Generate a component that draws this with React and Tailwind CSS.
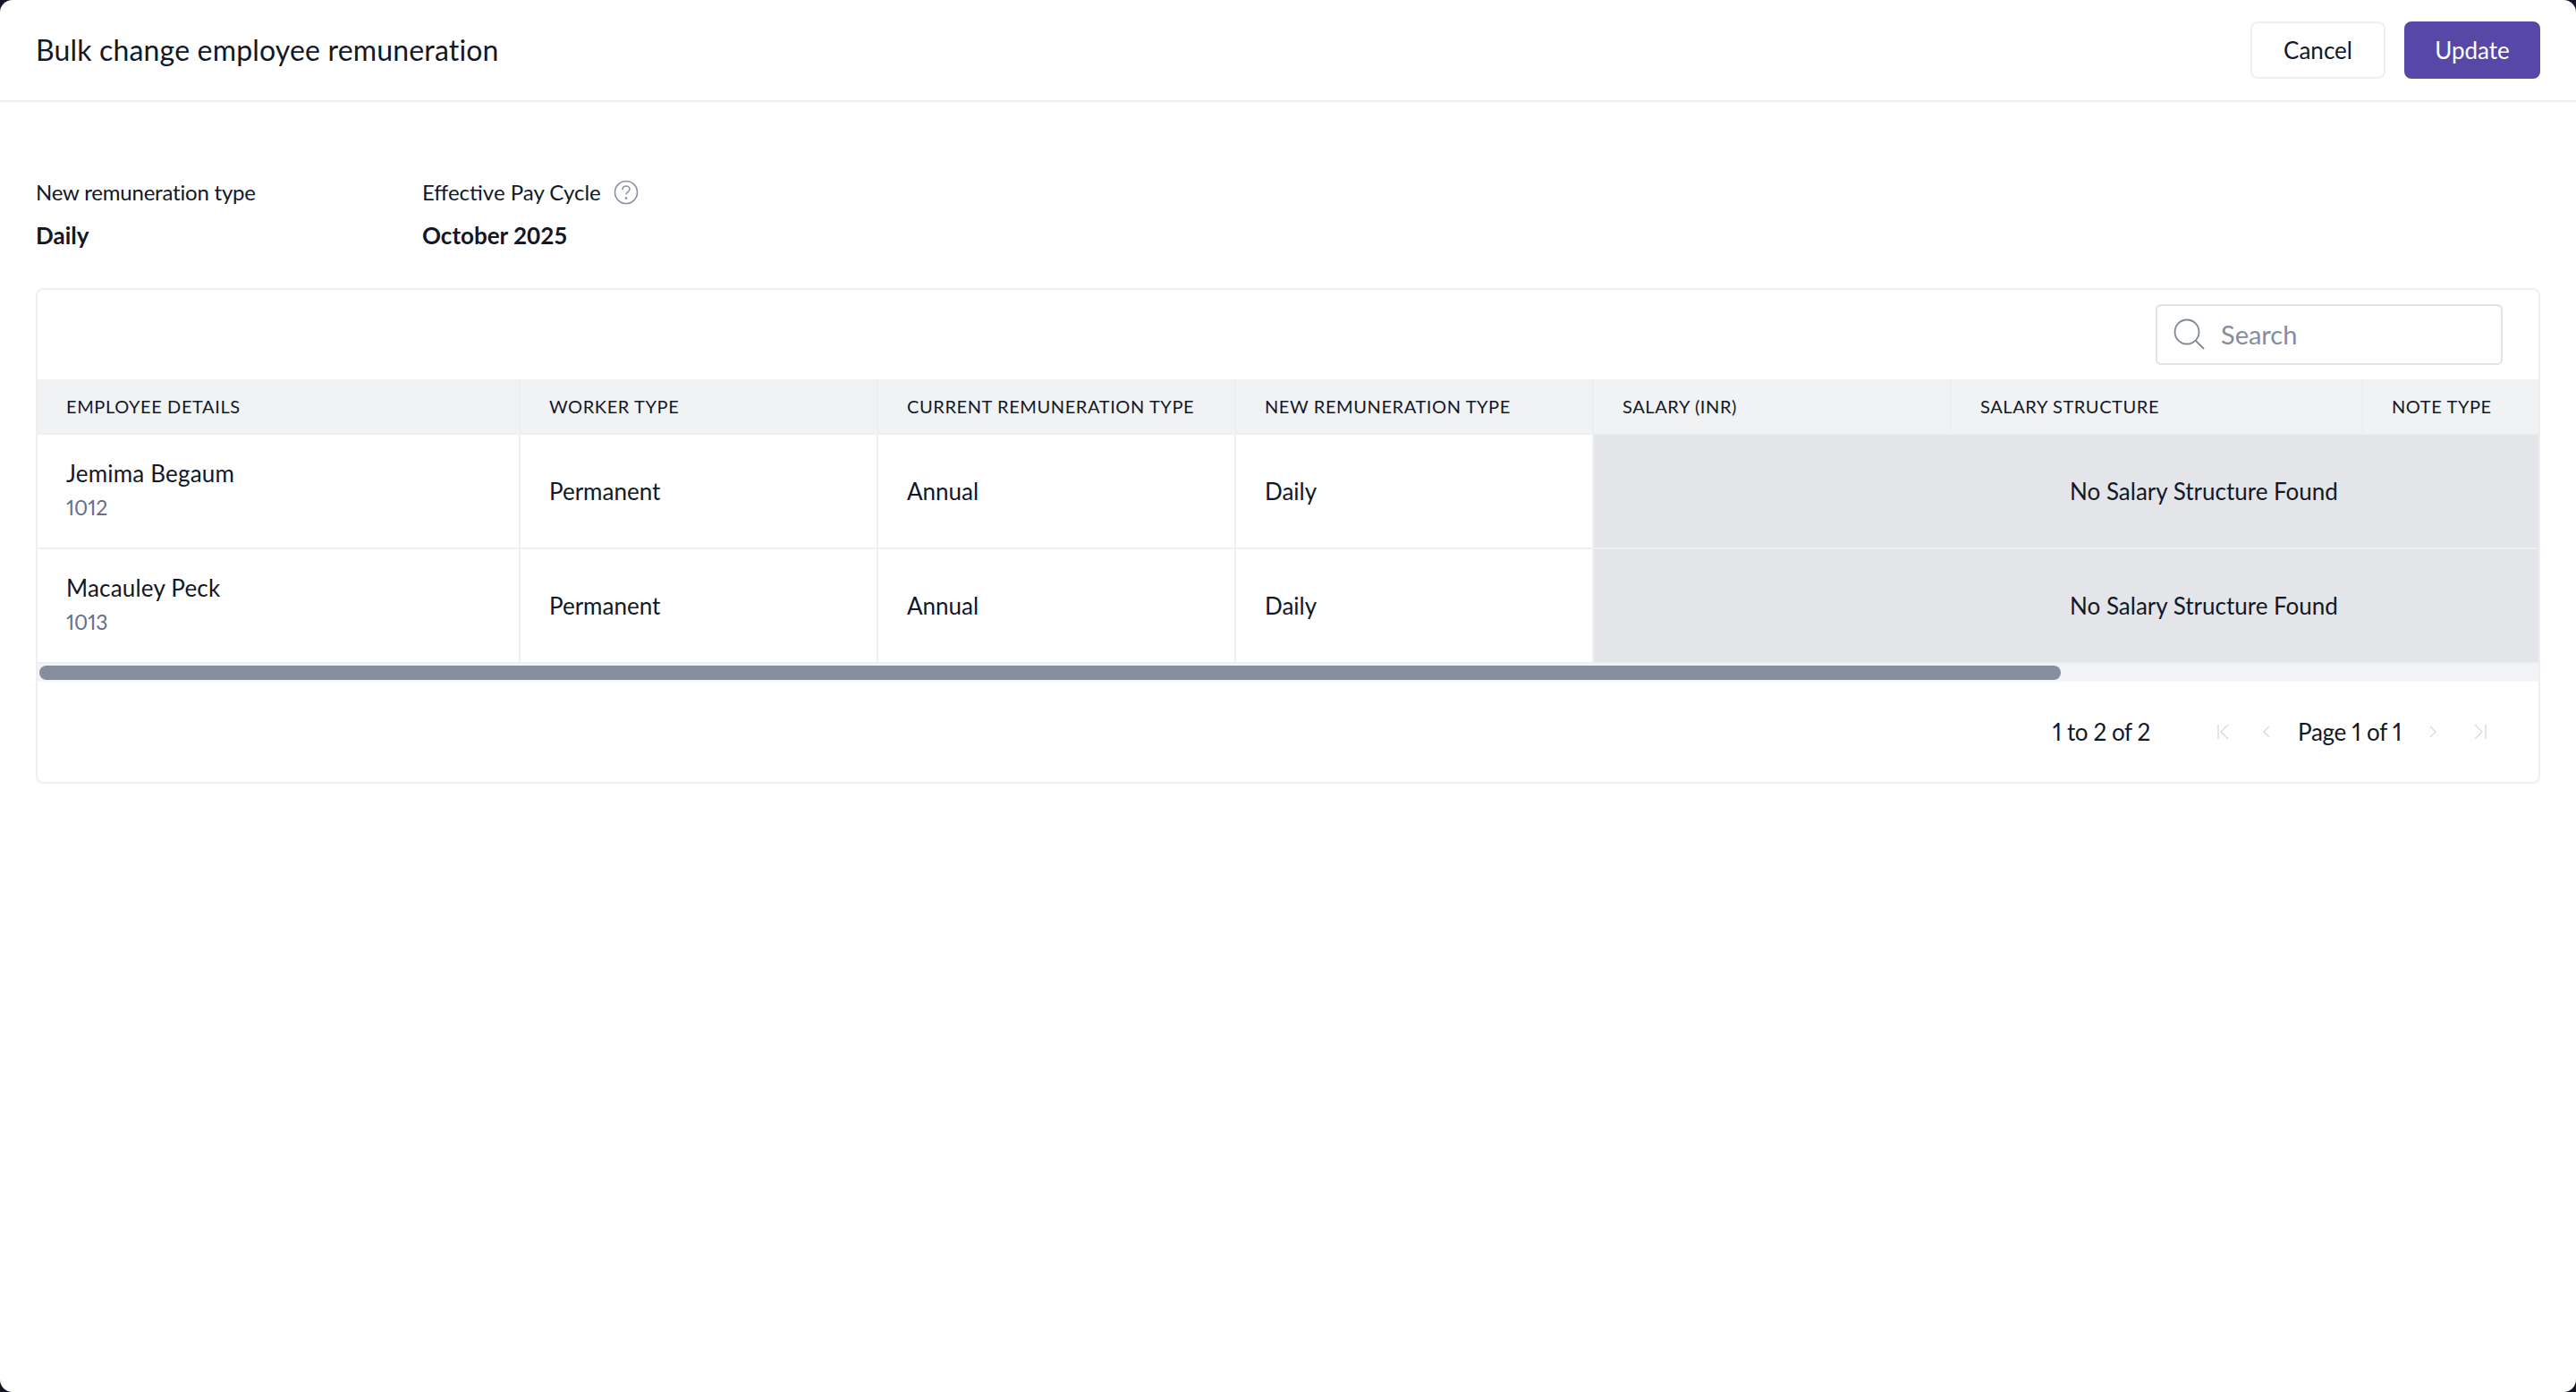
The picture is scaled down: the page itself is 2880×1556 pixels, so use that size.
import React from 'react';

const columns = [
  { label: 'Employee Details', width: 'w-[540px]' },
  { label: 'Worker Type', width: 'w-[400px]' },
  { label: 'Current Remuneration Type', width: 'w-[400px]' },
  { label: 'New Remuneration Type', width: 'w-[400px]' },
  { label: 'Salary (INR)', width: 'w-[400px]' },
  { label: 'Salary Structure', width: 'w-[460px]' },
  { label: 'Note Type', width: 'w-[504px]' },
];

const employees = [
  { name: 'Jemima Begaum', code: '1012' },
  { name: 'Macauley Peck', code: '1013' },
];

const PagerIcon = ({ d }) => (
  <svg width="20" height="20" viewBox="0 0 20 20" fill="none" stroke="#d5d8de" strokeWidth="1.3">
    <path d={d} />
  </svg>
);

const Row = ({ employee }) => (
  <div className="flex h-[128px] border-b-2 border-[#eeeff1] text-[26px] text-[#111827]">
    <div className="w-[540px] shrink-0 flex flex-col justify-center pl-[32px] pb-[4px] border-r-2 border-[#eeeff1]">
      <div className="leading-[34px] tracking-[0.2px]">{employee.name}</div>
      <div className="mt-[6px] text-[23px] leading-[30px] text-[#667085] [font-feature-settings:'pnum']">{employee.code}</div>
    </div>
    <div className="w-[400px] shrink-0 flex items-center pl-[32px] border-r-2 border-[#eeeff1]">Permanent</div>
    <div className="w-[400px] shrink-0 flex items-center pl-[32px] border-r-2 border-[#eeeff1]">Annual</div>
    <div className="w-[400px] shrink-0 flex items-center pl-[32px] border-r-2 border-[#eeeff1]">Daily</div>
    <div className="w-[1364px] shrink-0 flex items-center justify-center bg-[#e4e5e9]">No Salary Structure Found</div>
  </div>
);

const App = () => {
  return (
    <div className="h-[1556px] w-[2880px] bg-[#14142b] font-['Lato',sans-serif] text-[#111827]">
      <div className="h-full rounded-[14px] bg-white">
        {/* Header */}
        <div className="flex h-[114px] items-center justify-between border-b-2 border-[#eeeff1] px-[40px]">
          <h1 className="text-[32px] font-normal tracking-[0.17px]">Bulk change employee remuneration</h1>
          <div className="flex gap-[21px]">
            <button className="h-[64px] w-[151px] rounded-[8px] border-2 border-[#eeeff1] bg-white text-[26px]">Cancel</button>
            <button className="h-[64px] w-[152px] rounded-[8px] bg-[#5747a6] text-[26px] text-white">Update</button>
          </div>
        </div>

        <div className="px-[40px]">
          {/* Summary */}
          <div className="flex pt-[86px]">
            <div className="w-[432px]">
              <div className="text-[24px] leading-[30px] tracking-[-0.2px]">New remuneration type</div>
              <div className="mt-[18px] text-[26px] leading-[30px] font-bold">Daily</div>
            </div>
            <div>
              <div className="flex items-center gap-[14px] text-[24px] leading-[30px]">
                Effective Pay Cycle
                <svg width="28" height="28" viewBox="0 0 28 28" fill="none" stroke="#8a93a3" strokeWidth="1.6">
                  <circle cx="14" cy="14" r="12.5" />
                  <path d="M10 11c0-2.4 1.8-4 4-4s4 1.5 4 3.6c0 3-4 3-4 6" />
                  <circle cx="14" cy="20.5" r="0.6" />
                </svg>
              </div>
              <div className="mt-[18px] text-[26px] leading-[30px] font-bold">October 2025</div>
            </div>
          </div>

          {/* Table card */}
          <div className="mt-[44px] h-[554px] overflow-hidden rounded-[8px] border-2 border-[#eeeff1]">
            <div className="flex h-[100px] items-center justify-end pr-[40px]">
              <div className="flex h-[68px] w-[388px] items-center rounded-[6px] border-2 border-[#e0e2e7] pl-[16px]">
                <svg width="40" height="40" viewBox="0 0 40 40" fill="none" stroke="#7f8897" strokeWidth="1.8">
                  <circle cx="17" cy="17" r="13.5" />
                  <path d="M27 27l9 9" />
                </svg>
                <span className="ml-[15px] text-[29px] text-[#858d9c]">Search</span>
              </div>
            </div>

            <div className="overflow-hidden">
              <div className="flex h-[62px] w-[3104px] border-b-2 border-[#eeeff1] bg-[#f1f2f4]">
                {columns.map((col) => (
                  <div
                    key={col.label}
                    className={`${col.width} shrink-0 flex items-center pl-[32px] border-r-2 border-[#eceef0] text-[20px] uppercase tracking-[0.6px]`}
                  >
                    {col.label}
                  </div>
                ))}
              </div>
              <div className="w-[3104px]">
                {employees.map((employee) => (
                  <Row key={employee.code} employee={employee} />
                ))}
              </div>
            </div>

            {/* Scrollbar */}
            <div className="h-[20px] bg-[#f3f4f8] px-[2px] py-[2px]">
              <div className="h-[16px] w-[2260px] rounded-full bg-[#868e9c]" />
            </div>

            {/* Pagination */}
            <div className="flex h-[112px] items-center justify-end pr-[56px] text-[26px] [font-feature-settings:'pnum']">
              <span className="tracking-[-0.4px]">1 to 2 of 2</span>
              <div className="ml-[73px] flex items-center gap-[28px]">
                <PagerIcon d="M3 2v16M14 2l-8 8 8 8" />
                <PagerIcon d="M12 4l-6 6 6 6" />
              </div>
              <span className="mx-[24px] tracking-[-0.25px]">Page 1 of 1</span>
              <div className="flex items-center gap-[33px]">
                <PagerIcon d="M8 4l6 6-6 6" />
                <PagerIcon d="M5 2l8 8-8 8M17 2v16" />
              </div>
            </div>
          </div>
        </div>
      </div>
    </div>
  );
};

export default App;
